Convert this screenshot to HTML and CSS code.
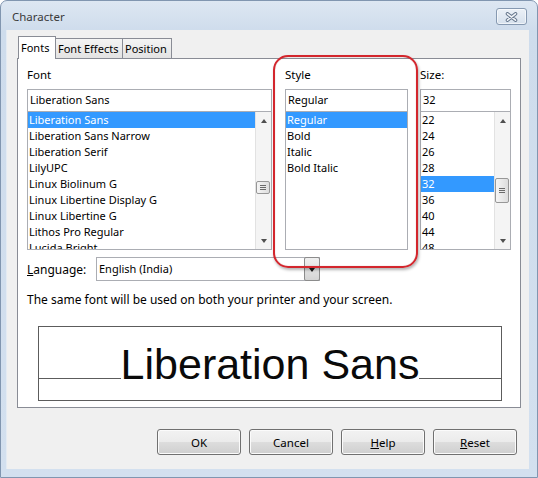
FILE: index.html
```html
<!DOCTYPE html>
<html lang="en">
<head>
    <meta charset="UTF-8">
    <title>Character</title>
    <link rel="stylesheet" href="styles.css">
</head>
<body>
    <div class="window">
        <div class="titlebar">
            <span class="title">Character</span>
            <button class="close" type="button" aria-label="Close">
                <svg width="13" height="10" viewBox="0 0 13 10">
                    <path d="M2.5 1.8 L10.5 8.2 M10.5 1.8 L2.5 8.2" stroke="#66778d" stroke-width="3.6" stroke-linecap="round"/>
                    <path d="M2.5 1.8 L10.5 8.2 M10.5 1.8 L2.5 8.2" stroke="#f3f6fa" stroke-width="1.6" stroke-linecap="round"/>
                </svg>
            </button>
        </div>

        <div class="client">
            <div class="tabs">
                <div class="tab tab-fonts active">Fonts</div>
                <div class="tab tab-effects">Font Effects</div>
                <div class="tab tab-position">Position</div>
            </div>

            <div class="panel">
                <div class="pickers">
                    <div class="picker picker-font">
                        <label class="picker-label">Font</label>
                        <div class="field">Liberation Sans</div>
                        <div class="listbox">
                            <ul class="items">
                                <li class="selected">Liberation Sans</li>
                                <li>Liberation Sans Narrow</li>
                                <li>Liberation Serif</li>
                                <li>LilyUPC</li>
                                <li>Linux Biolinum G</li>
                                <li>Linux Libertine Display G</li>
                                <li>Linux Libertine G</li>
                                <li>Lithos Pro Regular</li>
                                <li>Lucida Bright</li>
                            </ul>
                            <div class="scrollbar">
                                <span class="scroll-btn"><i class="arrow-up"></i></span>
                                <span class="scroll-track"><span class="thumb thumb-font"><i class="grip"></i></span></span>
                                <span class="scroll-btn"><i class="arrow-down"></i></span>
                            </div>
                        </div>
                    </div>

                    <div class="picker picker-style">
                        <label class="picker-label">Style</label>
                        <div class="field">Regular</div>
                        <div class="listbox">
                            <ul class="items">
                                <li class="selected">Regular</li>
                                <li>Bold</li>
                                <li>Italic</li>
                                <li>Bold Italic</li>
                            </ul>
                        </div>
                    </div>

                    <div class="picker picker-size">
                        <label class="picker-label">Size:</label>
                        <div class="field">32</div>
                        <div class="listbox">
                            <ul class="items">
                                <li>22</li>
                                <li>24</li>
                                <li>26</li>
                                <li>28</li>
                                <li class="selected">32</li>
                                <li>36</li>
                                <li>40</li>
                                <li>44</li>
                                <li>48</li>
                            </ul>
                            <div class="scrollbar">
                                <span class="scroll-btn"><i class="arrow-up"></i></span>
                                <span class="scroll-track"><span class="thumb thumb-size"><i class="grip"></i></span></span>
                                <span class="scroll-btn"><i class="arrow-down"></i></span>
                            </div>
                        </div>
                    </div>
                </div>

                <div class="language-row">
                    <label class="lang-label"><u>L</u>anguage:</label>
                    <div class="combo">
                        <span class="combo-text">English (India)</span>
                        <span class="combo-button"><i class="arrow-down"></i></span>
                    </div>
                </div>

                <p class="note">The same font will be used on both your printer and your screen.</p>

                <div class="preview">
                    <span class="rule"></span>
                    <span class="sample">Liberation Sans</span>
                    <span class="rule"></span>
                </div>
            </div>

            <div class="buttons">
                <button type="button">OK</button>
                <button type="button">Cancel</button>
                <button type="button"><u>H</u>elp</button>
                <button type="button"><u>R</u>eset</button>
            </div>
        </div>

        <!-- red annotation drawn over the Style column -->
        <div class="callout"></div>
    </div>
</body>
</html>
```

FILE: styles.css
```css
:root {
    --frame: #d3e0ef;
    --frame-edge: #8196b0;
    --client: #f0f0f0;
    --tab-border: #898c95;
    --field-border: #abadb3;
    --select: #3399ff;
    --text: #000000;
    --ring: #d3262d;
}

* {
    box-sizing: border-box;
}

body {
    margin: 0;
    font-family: "Noto Sans", "Open Sans", sans-serif;
    font-size: 12px;
    color: var(--text);
    background: #ffffff;
}

.window {
    position: relative;
    width: 538px;
    height: 478px;
    display: flex;
    flex-direction: column;
    border: 1px solid var(--frame-edge);
    border-radius: 7px 7px 0 0;
    background: linear-gradient(#dde7f2, #cedcec 30px, var(--frame));
}

.titlebar {
    height: 29px;
    display: flex;
    justify-content: space-between;
    align-items: flex-start;
    padding: 7px 10px 0 11px;
}

.title {
    font-size: 11.5px;
    line-height: 18px;
    color: #3a3a3a;
}

.close {
    width: 31px;
    height: 17px;
    padding: 0;
    display: flex;
    align-items: center;
    justify-content: center;
    border: 1px solid #8699b1;
    border-radius: 3px;
    background: linear-gradient(#ecf1f7, #d6e1ed);
    box-shadow: inset 0 0 0 1px rgba(255, 255, 255, 0.6);
}

.client {
    flex: 1;
    margin: 0 8px 8px 5px;
    padding: 6px 8px 0 10px;
    background: var(--client);
    border-left: 1px solid #e4ebf3;
}

/* tabs */

.tabs {
    position: relative;
    z-index: 1;
    height: 23px;
    margin: 0 0 -1px 1px;
    display: flex;
    align-items: flex-end;
    font-size: 11px;
}

.tab {
    height: 20px;
    margin-bottom: 1px;
    padding: 1px 0 0 2px;
    line-height: 17px;
    white-space: nowrap;
    border: 1px solid var(--tab-border);
    border-bottom: none;
    background: linear-gradient(#f4f4f4, #e3e3e3);
}

.tab + .tab {
    margin-left: -1px;
}

.tab.active {
    height: 23px;
    margin-bottom: 0;
    line-height: 19px;
    background: #ffffff;
}

.tab-fonts { width: 38px; }
.tab-effects { width: 68px; }
.tab-position { width: 50px; }

.panel {
    height: 350px;
    padding: 8px 8px 0 9px;
    border: 1px solid var(--tab-border);
    background: #ffffff;
}

/* font / style / size pickers */

.pickers {
    display: flex;
}

.picker-font { width: 245px; }
.picker-style { width: 123px; margin-left: 13px; }
.picker-size { width: 91px; margin-left: 12px; }

.picker-label {
    display: block;
    height: 16px;
    font-size: 11.5px;
    line-height: 16px;
    margin-bottom: 6px;
}

.field {
    height: 22px;
    padding-left: 2px;
    font-size: 11px;
    line-height: 20px;
    white-space: nowrap;
    border: 1px solid var(--field-border);
    border-bottom: none;
}

.listbox {
    height: 139px;
    display: flex;
    overflow: hidden;
    border: 1px solid var(--field-border);
    background: #ffffff;
}

.items {
    flex: 1;
    min-width: 0;
    margin: 0;
    padding: 0;
    list-style: none;
    overflow: hidden;
    font-size: 11px;
}

.items li {
    height: 16px;
    padding-left: 1px;
    line-height: 16px;
    white-space: nowrap;
}

.items li.selected {
    background: var(--select);
    color: #ffffff;
}

.scrollbar {
    width: 16px;
    flex: none;
    display: flex;
    flex-direction: column;
    border-left: 1px solid #e2e2e2;
    background: #f4f4f4;
}

.scroll-btn {
    height: 17px;
    display: flex;
    align-items: center;
    justify-content: center;
}

.arrow-up,
.arrow-down {
    width: 0;
    height: 0;
    border-left: 3.5px solid transparent;
    border-right: 3.5px solid transparent;
}

.arrow-up {
    border-bottom: 4px solid #4f4f4f;
}

.arrow-down {
    border-top: 4px solid #4f4f4f;
}

.scroll-track {
    flex: 1;
    padding: 0 1px 0 0;
}

.thumb {
    display: flex;
    align-items: center;
    justify-content: center;
    border: 1px solid #979797;
    border-radius: 2px;
    background: linear-gradient(to right, #f5f5f5, #dddddd);
}

.thumb-font {
    height: 13px;
    margin-top: 52px;
}

.thumb-size {
    height: 25px;
    margin-top: 49px;
}

.grip {
    width: 6px;
    height: 5px;
    background: repeating-linear-gradient(#6a6a6a 0 1px, transparent 1px 2px);
}

/* language */

.language-row {
    display: flex;
    align-items: center;
    margin-top: 7px;
}

.lang-label {
    width: 69px;
}

.combo {
    width: 224px;
    height: 24px;
    display: flex;
    border: 1px solid var(--field-border);
    background: #ffffff;
}

.combo-text {
    flex: 1;
    padding-left: 2px;
    font-size: 11px;
    line-height: 22px;
}

.combo-button {
    width: 16px;
    margin: -1px -1px -1px 0;
    display: flex;
    align-items: center;
    justify-content: center;
    border: 1px solid #8c8c8c;
    border-radius: 2px;
    background: linear-gradient(#f0f0f0, #d4d4d4);
}

.combo-button .arrow-down {
    border-top-color: #1a1a1a;
    margin-top: 1px;
}

.note {
    margin: 11px 0 0;
    line-height: 16px;
}

/* preview */

.preview {
    height: 75px;
    margin: 18px 10px 0 11px;
    padding-top: 13px;
    display: flex;
    align-items: baseline;
    border: 1px solid #5c5c5c;
}

.rule {
    flex: 1;
    height: 20px;
    border-bottom: 1px solid #5c5c5c;
}

.sample {
    font-family: "Liberation Sans", Arial, sans-serif;
    font-size: 43px;
    color: #0a0a0a;
}

/* dialog buttons */

.buttons {
    display: flex;
    justify-content: flex-end;
    gap: 8px;
    margin-top: 21px;
    padding-right: 4px;
}

.buttons button {
    width: 84px;
    height: 26px;
    padding: 0;
    font-family: inherit;
    font-size: 11.5px;
    color: var(--text);
    border: 1px solid #707070;
    border-radius: 3px;
    background: linear-gradient(#f2f2f2, #ebebeb 50%, #dddddd 50%, #cfcfcf);
    box-shadow: inset 0 0 0 1px #fbfbfb;
}

.callout {
    position: absolute;
    left: 272px;
    top: 54px;
    width: 145px;
    height: 213px;
    border: 2px solid var(--ring);
    border-radius: 15px;
    box-shadow: 1px 2px 3px rgba(0, 0, 0, 0.3), inset 0 0 1px rgba(120, 0, 0, 0.4);
    pointer-events: none;
}
```
